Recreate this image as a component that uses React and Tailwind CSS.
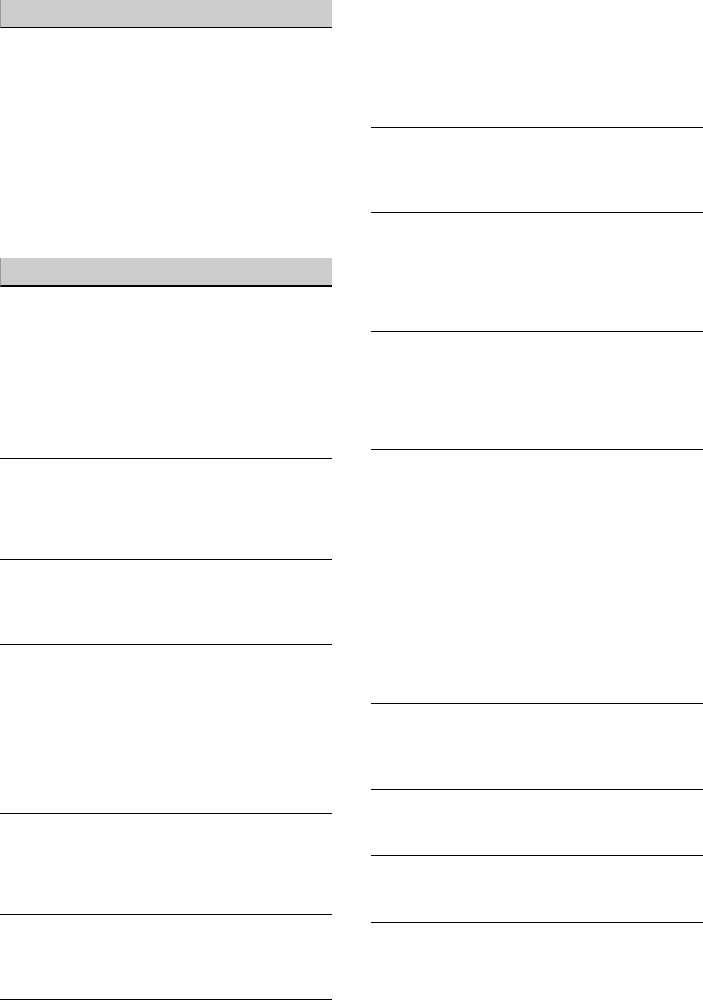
export default function App() {
  return (
    <div className="w-[703px] h-[1000px] bg-white flex overflow-hidden">
      <div className="w-[332px] flex flex-col shrink-0">
        <div className="h-[28px] bg-[#cccccc] border-l border-l-[#999999] border-b border-b-black" />
        <div className="h-[230px]" />
        <div className="h-[29px] bg-[#cccccc] border-l border-l-[#999999] border-b-2 border-b-black" />
        <div className="h-[172px] border-b border-b-black" />
        <div className="h-[101px] border-b border-b-black" />
        <div className="h-[85px] border-b border-b-black" />
        <div className="h-[169px] border-b border-b-black" />
        <div className="h-[101px] border-b border-b-black" />
        <div className="h-[85px] border-b border-b-black" />
      </div>
      <div className="w-[39px] shrink-0" />
      <div className="w-[332px] flex flex-col shrink-0">
        <div className="h-[128px] border-b border-b-black" />
        <div className="h-[85px] border-b border-b-black" />
        <div className="h-[119px] border-b border-b-black" />
        <div className="h-[118px] border-b border-b-black" />
        <div className="h-[254px] border-b border-b-black" />
        <div className="h-[86px] border-b border-b-black" />
        <div className="h-[66px] border-b border-b-black" />
        <div className="h-[67px] border-b border-b-black" />
      </div>
    </div>
  );
}
